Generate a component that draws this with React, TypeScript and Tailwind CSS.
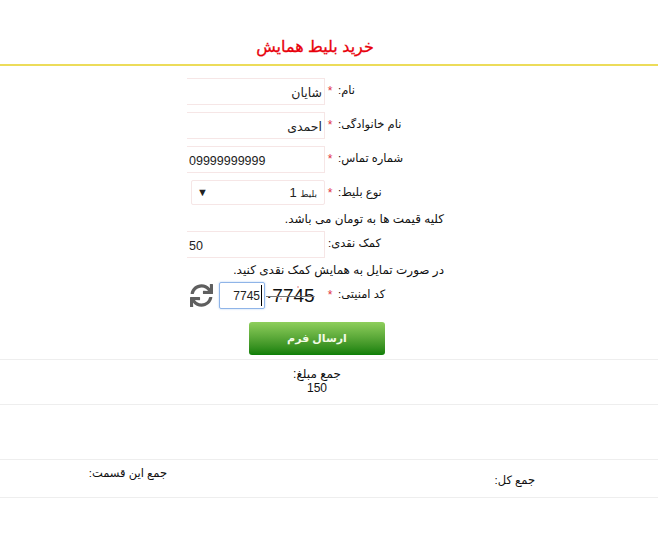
import React from "react";
import { FaSync } from "react-icons/fa";

const FONT = `font-['Liberation_Sans','DejaVu_Sans',sans-serif]`;

const Star = () => (
  <span className="w-[10px] shrink-0 text-center text-[12px] leading-none text-[#e0313f]">*</span>
);

type RowProps = {
  label: string;
  required?: boolean;
  children: React.ReactNode;
};

const Row = ({ label, required = true, children }: RowProps) => (
  <div className="flex items-start">
    {children}
    <div className="flex h-[26px] items-center gap-[3px]">
      {required ? <Star /> : <span className="w-[0px]" />}
      <span dir="rtl" className="text-[11.5px] text-[#111] whitespace-nowrap">
        {label}
      </span>
    </div>
  </div>
);

const Field = ({ value, dir = "rtl" }: { value: string; dir?: "rtl" | "ltr" }) => (
  <input
    readOnly
    dir={dir}
    value={value}
    className="h-[27px] w-[138px] border border-l-0 border-[#f6e6e6] bg-white px-[2px] pt-[2px] text-[12.5px] text-[#222] outline-none"
  />
);

const App = () => {
  return (
    <div className={`min-h-[541px] bg-white ${FONT}`}>
      <h1
        dir="rtl"
        className="flex h-[66px] items-end justify-center border-b-2 border-[#ecdc5a] pr-[28px] pb-[5px] text-[16px] leading-[24px] font-normal text-[#e8000b] [-webkit-text-stroke:0.3px_#e8000b]"
      >
        خرید بلیط همایش
      </h1>

      <form className="ml-[187px] flex w-[257px] flex-col pt-[12px]">
        <div className="mb-[7px]">
          <Row label="نام:">
            <Field value="شایان" />
          </Row>
        </div>
        <div className="mb-[7px]">
          <Row label="نام خانوادگی:">
            <Field value="احمدی" />
          </Row>
        </div>
        <div className="mb-[7px]">
          <Row label="شماره تماس:">
            <Field value="09999999999" dir="ltr" />
          </Row>
        </div>
        <Row label="نوع بلیط:">
          <div className="ml-[4px] flex h-[25px] w-[134px] items-center justify-between rounded-[2px] border border-[#f6e6e6] pr-[7px] pl-[5px] text-[#222]">
            <span className="text-[11px]">▼</span>
            <span dir="rtl" className="text-[13px]">
              <span className="text-[9px]">بلیط</span> 1
            </span>
          </div>
        </Row>
        <p dir="rtl" className="mt-[5px] h-[20px] text-[12px] leading-[16px] text-[#111]">
          کلیه قیمت ها به تومان می باشد.
        </p>
        <Row label="کمک نقدی:" required={false}>
          <Field value="50" dir="ltr" />
        </Row>
        <p dir="rtl" className="mt-[4px] h-[20px] text-[12px] leading-[16px] text-[#111]">
          در صورت تمایل به همایش کمک نقدی کنید.
        </p>
        <Row label="کد امنیتی:">
          <div className="flex h-[27px] w-[138px] items-center">
            <FaSync className="ml-[3px] h-[23px] w-[23px] shrink-0 text-[#5f5f5f]" />
            <div className="ml-[6px] flex h-[27px] w-[46px] shrink-0 items-center justify-end rounded-[2px] border border-[#8fb4e8] pr-[2px] text-[12px] text-[#222] shadow-[0_0_2px_#a9c8f0]">
              7745
              <span className="ml-[1px] h-[21px] w-px bg-black" />
            </div>
            <span className="relative ml-[1px] text-[19px] leading-none text-[#111] line-through decoration-[#777] decoration-1">
              ·7745
              <span className="absolute top-[0px] left-[31px] h-[2px] w-[2px] rounded-full bg-[#eeaaaa]" />
              <span className="absolute top-[12px] left-[14px] h-[2px] w-[2px] rounded-full bg-[#eeaaaa]" />
            </span>
          </div>
        </Row>
        <button
          type="button"
          dir="rtl"
          className="mt-[13px] ml-[62px] h-[33px] w-[136px] rounded-[3px] bg-gradient-to-b from-[#8fcf5c] to-[#0a7f06] text-[11px] font-bold text-[#f2fbe6]"
        >
          ارسال فرم
        </button>
      </form>

      <div className="mt-[4px] flex h-[46px] flex-col items-center border-y border-[#eeeeee] pt-[7px] pr-[24px] text-[12px] leading-[14px] text-[#111]">
        <span dir="rtl">جمع مبلغ:</span>
        <span>150</span>
      </div>

      <div className="mt-[54px] flex h-[39px] border-y border-[#eeeeee] text-[11.5px] text-[#111]">
        <div dir="rtl" className="ml-[88px] w-[79px] pt-[5px] whitespace-nowrap">
          جمع این قسمت:
        </div>
        <div dir="rtl" className="ml-[325px] w-[43px] pt-[12px] whitespace-nowrap">
          جمع کل:
        </div>
      </div>
    </div>
  );
};

export default App;
